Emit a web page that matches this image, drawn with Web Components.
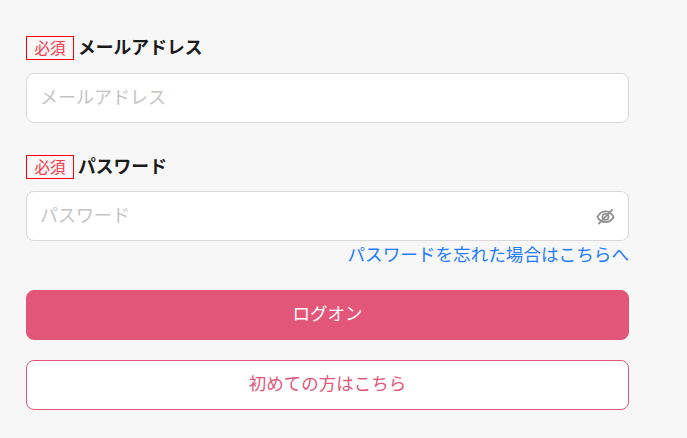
<!DOCTYPE html>
<html lang="ja">
<head>
<meta charset="utf-8">
<title>ログオン</title>
<style>
  html, body { margin: 0; height: 100%; background: #f7f7f7; }
  body { font-family: "Noto Sans CJK JP", "Noto Sans", sans-serif; }
</style>
</head>
<body>
<login-form></login-form>

<script>
// Label row with the red "required" badge
class FieldLabel extends HTMLElement {
  constructor() {
    super();
    this.attachShadow({ mode: 'open' }).innerHTML = `
      <style>
        :host { display: flex; align-items: center; gap: 4px; height: 24px; }
        .badge {
          box-sizing: border-box; width: 48px; height: 24px; padding-bottom: 1px;
          display: flex; align-items: center; justify-content: center;
          border: 1px solid #f00; color: #f83a4a;
          font-size: 15.5px; line-height: 1;
        }
        .text { font-size: 17.8px; font-weight: 700; color: #1a1a1a; line-height: 20px; padding-bottom: 4px; white-space: nowrap; }
      </style>
      <span class="badge">必須</span>
      <span class="text"><slot></slot></span>
    `;
  }
}

// Text box, with an optional eye toggle on the right
class TextField extends HTMLElement {
  constructor() {
    super();
    const eye = this.hasAttribute('eye') ? `
      <svg viewBox="0 0 20 20" width="19" height="19" fill="none" stroke="#8f8f8f" stroke-width="1.8">
        <path d="M1.500 10.500C3.500 6.500 6.500 4.500 10 4.500S16.500 6.500 18.500 10.500C16.500 14 13.500 16 10 16S3.500 14 1.500 10.500Z"/>
        <circle cx="10" cy="10.300" r="3.200"/>
        <path d="M2.500 18L17.500 2.500"/>
      </svg>` : '';
    this.attachShadow({ mode: 'open' }).innerHTML = `
      <style>
        :host {
          display: flex; align-items: center; box-sizing: border-box; height: 50px;
          padding: 0 13px; background: #fff;
          border: 1px solid #d9d9d9; border-radius: 8px;
        }
        .ph { flex: 1; font-size: 18px; line-height: 24px; padding-bottom: 4px; color: #c4c4c4; white-space: nowrap; }
        svg { display: block; }
      </style>
      <span class="ph">${this.getAttribute('placeholder') || ''}</span>
      ${eye}
    `;
  }
}

// Filled or outlined full width button
class PinkButton extends HTMLElement {
  constructor() {
    super();
    this.attachShadow({ mode: 'open' }).innerHTML = `
      <style>
        :host {
          display: flex; align-items: center; justify-content: center; box-sizing: border-box;
          height: 50px; border: 1px solid #e25779; border-radius: 8px;
          font-size: 17.5px; white-space: nowrap; padding-bottom: 6px;
          background: #fff; color: #e25779;
        }
        :host([filled]) { background: #e25779; color: #fff; }
      </style>
      <slot></slot>
    `;
  }
}

class LoginForm extends HTMLElement {
  constructor() {
    super();
    this.attachShadow({ mode: 'open' }).innerHTML = `
      <style>
        :host { display: flex; flex-direction: column; width: 603px; padding: 36px 0 0 26px; }
        field-label { margin-bottom: 13px; }
        .pw { margin-top: 32px; margin-bottom: 12px; }
        .forgot {
          margin-top: 2px; height: 25px; line-height: 22px; text-align: right;
          font-size: 17.6px; color: #1f7bff; white-space: nowrap;
        }
        pink-button { margin-top: 20px; }
        .logon { margin-top: 22px; }
      </style>
      <field-label>メールアドレス</field-label>
      <text-field placeholder="メールアドレス"></text-field>
      <field-label class="pw">パスワード</field-label>
      <text-field placeholder="パスワード" eye></text-field>
      <div class="forgot">パスワードを忘れた場合はこちらへ</div>
      <pink-button class="logon" filled>ログオン</pink-button>
      <pink-button>初めての方はこちら</pink-button>
    `;
  }
}

customElements.define('field-label', FieldLabel);
customElements.define('text-field', TextField);
customElements.define('pink-button', PinkButton);
customElements.define('login-form', LoginForm);
</script>
</body>
</html>
